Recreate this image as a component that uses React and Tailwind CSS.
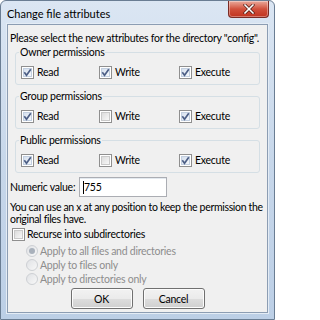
import React from 'react';

const body = { fontFamily: 'Lato, "Noto Sans", sans-serif' };

function Check({ checked }) {
  return (
    <span className="relative grid h-[13px] w-[13px] shrink-0 place-items-center border border-[#8f8f8f] bg-white">
      <span
        className={
          checked
            ? 'h-[9px] w-[9px] border border-[#c2cfe0] bg-gradient-to-br from-[#d6e0ee] to-[#f5f8fb]'
            : 'h-[9px] w-[9px] border border-[#c9c9c9] bg-gradient-to-br from-[#dcdcdc] to-[#f8f8f8]'
        }
      />
      {checked && (
        <svg viewBox="0 0 13 13" className="absolute -left-px -top-px h-[13px] w-[13px]">
          <path d="M3.3 6.3 L5.5 9.2 L9.8 3.2" fill="none" stroke="#4d5f86" strokeWidth="1.7" />
        </svg>
      )}
    </span>
  );
}

function Radio({ selected }) {
  return (
    <span className="grid h-[12px] w-[12px] shrink-0 place-items-center rounded-full border border-[#cdd0d4] bg-gradient-to-br from-[#e0e2e5] to-[#f8f8f8]">
      {selected && <span className="h-[6px] w-[6px] rounded-full bg-[#a9b1bb]" />}
    </span>
  );
}

function Group({ title, perms }) {
  return (
    <div className="relative mx-[7px] mt-[11px] h-[33px] rounded-[3px] border border-[#d5dfe5] first:mt-0">
      <span className="absolute -top-[9px] left-[3px] bg-[#f0f0f0] px-px leading-[16px]">{title}</span>
      <div className="flex pl-[5px] pt-[12px]">
        {perms.map(([label, on], i) => (
          <div key={label} className={'flex items-center gap-[3px] ' + (i === 0 ? 'w-[78px]' : i === 1 ? 'w-[80px]' : '')}>
            <Check checked={on} />
            <span className="leading-[15px]">{label}</span>
          </div>
        ))}
      </div>
    </div>
  );
}

export default function App() {
  return (
    <div
      style={body}
      className="flex h-[320px] w-[275px] flex-col overflow-hidden rounded-t-[6px] border border-[#6a7d93] bg-gradient-to-b from-[#dbe6f3] via-[#c7d7ea] to-[#bccfe6] text-[10.5px] tracking-[-0.25px] text-black"
    >
      {/* title bar */}
      <div className="flex h-[22px] items-start justify-between">
        <span className="pl-[6px] pt-[5px] text-[11px] leading-[16px] tracking-normal text-black">Change file attributes</span>
        <button className="mr-[5px] flex h-[17px] w-[41px] items-center justify-center rounded-b-[4px] border border-t-0 border-[#7a2b25] bg-gradient-to-b from-[#e9a99c] via-[#d1503c] to-[#c0321e] shadow-[inset_0_0_0_1px_rgba(255,255,255,0.35)]">
          <svg viewBox="0 0 12 10" className="h-[10px] w-[12px]">
            <path d="M2 1 L10 9 M10 1 L2 9" stroke="#4a1a14" strokeWidth="3" strokeLinecap="square" />
            <path d="M2 1 L10 9 M10 1 L2 9" stroke="#ffffff" strokeWidth="1.6" strokeLinecap="square" />
          </svg>
        </button>
      </div>

      {/* client area */}
      <div className="mx-[6px] mb-[6px] mt-[1px] flex flex-1 flex-col border border-[#8c9db3] bg-[#f0f0f0] shadow-[0_0_0_1px_#e4ecf5]">
        <p className="mt-[6px] whitespace-nowrap pl-[2px] leading-[15px]">
          Please select the new attributes for the directory "config".
        </p>

        <div className="mt-[6px] flex flex-col">
          <Group title="Owner permissions" perms={[['Read', true], ['Write', true], ['Execute', true]]} />
          <Group title="Group permissions" perms={[['Read', true], ['Write', false], ['Execute', true]]} />
          <Group title="Public permissions" perms={[['Read', true], ['Write', false], ['Execute', true]]} />
        </div>

        <div className="mt-[4px] flex items-center pl-[2px]">
          <span className="w-[69px] leading-[15px]">Numeric value:</span>
          <div className="flex h-[20px] w-[88px] items-center border border-[#abadb3] bg-white pl-[3px] shadow-[inset_0_1px_0_#e3e9ef]">
            <span className="h-[13px] w-px bg-black" />
            <span className="leading-[15px]">755</span>
          </div>
        </div>

        <p className="mt-[4px] whitespace-nowrap pl-[2px] leading-[12px] tracking-[-0.32px]">
          You can use an x at any position to keep the permission the
          <br />
          original files have.
        </p>

        <div className="mt-[2px] flex items-center gap-[2px] pl-[4px]">
          <Check checked={false} />
          <span className="leading-[15px]">Recurse into subdirectories</span>
        </div>

        <div className="mt-[2px] flex flex-col pl-[18px] text-[#8d8d8d]">
          {['Apply to all files and directories', 'Apply to files only', 'Apply to directories only'].map((t, i) => (
            <div key={t} className="flex h-[14px] items-center gap-[2px]">
              <Radio selected={i === 0} />
              <span className="leading-[14px]">{t}</span>
            </div>
          ))}
        </div>

        <div className="mt-[2px] flex justify-center gap-[10px]">
          {['OK', 'Cancel'].map((b) => (
            <button
              key={b}
              className="h-[21px] w-[62px] rounded-[3px] border border-[#707070] bg-[linear-gradient(#f2f2f2_0%,#ebebeb_50%,#dddddd_51%,#cfcfcf_100%)] leading-[16px] shadow-[inset_0_0_0_1px_#fcfcfc]"
            >
              {b}
            </button>
          ))}
        </div>
      </div>
    </div>
  );
}
